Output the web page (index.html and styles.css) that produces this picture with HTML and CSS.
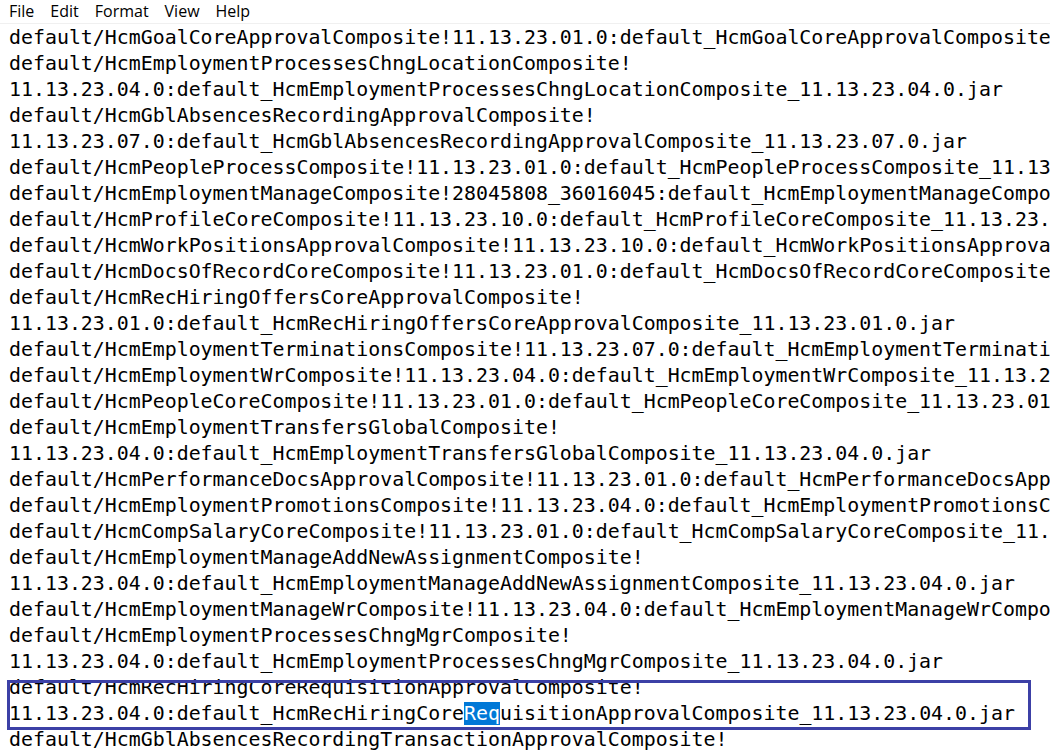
FILE: index.html
```html
<!DOCTYPE html>
<html lang="en">
<head>
    <meta charset="UTF-8">
    <title>hcm_composites.txt - Notepad</title>
    <link rel="stylesheet" href="styles.css">
</head>
<body>
    <nav class="menubar">
        <span>File</span>
        <span>Edit</span>
        <span>Format</span>
        <span>View</span>
        <span>Help</span>
    </nav>
    <div class="editor">
        <pre class="text">default/HcmGoalCoreApprovalComposite!11.13.23.01.0:default_HcmGoalCoreApprovalComposite_11.13.23.01.0.jar
default/HcmEmploymentProcessesChngLocationComposite!
11.13.23.04.0:default_HcmEmploymentProcessesChngLocationComposite_11.13.23.04.0.jar
default/HcmGblAbsencesRecordingApprovalComposite!
11.13.23.07.0:default_HcmGblAbsencesRecordingApprovalComposite_11.13.23.07.0.jar
default/HcmPeopleProcessComposite!11.13.23.01.0:default_HcmPeopleProcessComposite_11.13.23.01.0.jar
default/HcmEmploymentManageComposite!28045808_36016045:default_HcmEmploymentManageComposite_28045808_36016045.jar
default/HcmProfileCoreComposite!11.13.23.10.0:default_HcmProfileCoreComposite_11.13.23.10.0.jar
default/HcmWorkPositionsApprovalComposite!11.13.23.10.0:default_HcmWorkPositionsApprovalComposite_11.13.23.10.0.jar
default/HcmDocsOfRecordCoreComposite!11.13.23.01.0:default_HcmDocsOfRecordCoreComposite_11.13.23.01.0.jar
default/HcmRecHiringOffersCoreApprovalComposite!
11.13.23.01.0:default_HcmRecHiringOffersCoreApprovalComposite_11.13.23.01.0.jar
default/HcmEmploymentTerminationsComposite!11.13.23.07.0:default_HcmEmploymentTerminationsComposite_11.13.23.07.0.jar
default/HcmEmploymentWrComposite!11.13.23.04.0:default_HcmEmploymentWrComposite_11.13.23.04.0.jar
default/HcmPeopleCoreComposite!11.13.23.01.0:default_HcmPeopleCoreComposite_11.13.23.01.0.jar
default/HcmEmploymentTransfersGlobalComposite!
11.13.23.04.0:default_HcmEmploymentTransfersGlobalComposite_11.13.23.04.0.jar
default/HcmPerformanceDocsApprovalComposite!11.13.23.01.0:default_HcmPerformanceDocsApprovalComposite_11.13.23.01.0.jar
default/HcmEmploymentPromotionsComposite!11.13.23.04.0:default_HcmEmploymentPromotionsComposite_11.13.23.04.0.jar
default/HcmCompSalaryCoreComposite!11.13.23.01.0:default_HcmCompSalaryCoreComposite_11.13.23.01.0.jar
default/HcmEmploymentManageAddNewAssignmentComposite!
11.13.23.04.0:default_HcmEmploymentManageAddNewAssignmentComposite_11.13.23.04.0.jar
default/HcmEmploymentManageWrComposite!11.13.23.04.0:default_HcmEmploymentManageWrComposite_11.13.23.04.0.jar
default/HcmEmploymentProcessesChngMgrComposite!
11.13.23.04.0:default_HcmEmploymentProcessesChngMgrComposite_11.13.23.04.0.jar
default/HcmRecHiringCoreRequisitionApprovalComposite!
11.13.23.04.0:default_HcmRecHiringCore<span class="selected">Req</span>uisitionApprovalComposite_11.13.23.04.0.jar
default/HcmGblAbsencesRecordingTransactionApprovalComposite!</pre>
        <div class="callout"></div>
    </div>
</body>
</html>
```

FILE: styles.css
```css
body {
    margin: 0;
    padding: 0;
    background-color: #fff;
    overflow: hidden;
}

.menubar {
    display: flex;
    gap: 16px;
    height: 23px;
    padding-left: 9px;
    border-bottom: 1px solid #f0f0f0;
    font-family: "Open Sans", "Noto Sans", sans-serif;
    font-size: 16px;
    line-height: 22px;
    color: #000;
}

.editor {
    position: relative;
    height: 731px;
    overflow: hidden;
}

.text {
    margin: 0;
    padding: 1px 0 0 9px;
    font-family: "DejaVu Sans Mono", "Liberation Mono", monospace;
    font-size: 19.9px;
    line-height: 26px;
    color: #000;
    white-space: pre;
}

.selected {
    background-color: #0078d7;
    color: #fff;
}

.callout {
    position: absolute;
    left: 7px;
    top: 656px;
    width: 1018px;
    height: 44px;
    border: 3px solid #3c40a6;
}
```
